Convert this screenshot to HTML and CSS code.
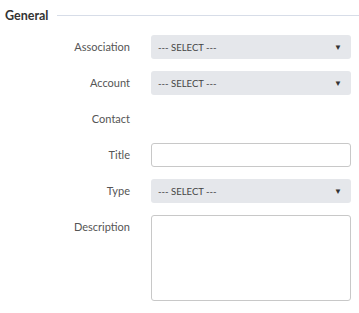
FILE: index.html
```html
<!DOCTYPE html>
<html>
<head>
<meta charset="utf-8">
<link rel="stylesheet" href="styles.css">
</head>
<body>
<div class="section">
  <div class="section-head">
    <span class="section-title">General</span>
    <span class="section-line"></span>
  </div>
  <div class="form">
    <label class="lbl">Association</label>
    <div class="select"><span>--- SELECT ---</span><span class="arrow">▼</span></div>
    <label class="lbl">Account</label>
    <div class="select"><span>--- SELECT ---</span><span class="arrow">▼</span></div>
    <label class="lbl">Contact</label>
    <div class="empty"></div>
    <label class="lbl">Title</label>
    <div class="input"></div>
    <label class="lbl">Type</label>
    <div class="select"><span>--- SELECT ---</span><span class="arrow">▼</span></div>
    <label class="lbl">Description</label>
    <div class="textarea"></div>
  </div>
</div>
</body>
</html>
```
FILE: styles.css
```css
html, body {
  margin: 0;
  padding: 0;
  background: #fff;
}
body {
  font-family: Lato, "Noto Sans", sans-serif;
  color: #555;
  width: 359px;
  height: 313px;
  overflow: hidden;
}
.section-head {
  display: flex;
  align-items: center;
  height: 30px;
  padding-left: 5px;
  margin-bottom: 5px;
}
.section-title {
  font-weight: 700;
  font-size: 12.5px;
  color: #333;
}
.section-line {
  flex: 1;
  height: 1px;
  background: #d7dde8;
  margin-left: 9px;
}
.form {
  display: grid;
  grid-template-columns: 130px 200px;
  column-gap: 21px;
  row-gap: 12px;
  grid-auto-rows: 24px;
}
.form .lbl {
  font-size: 11px;
  text-align: right;
  line-height: 24px;
  color: #555;
}
.select {
  background: #e5e7eb;
  border-radius: 3px;
  display: flex;
  align-items: center;
  justify-content: space-between;
  padding: 0 9px 0 7px;
  font-size: 9.5px;
  color: #444;
}
.arrow {
  font-size: 8px;
  color: #333;
}
.input {
  border: 1px solid #c8c8c8;
  border-radius: 3px;
  box-sizing: border-box;
}
.textarea {
  border: 1px solid #c8c8c8;
  border-radius: 3px;
  box-sizing: border-box;
  height: 86px;
}
```
